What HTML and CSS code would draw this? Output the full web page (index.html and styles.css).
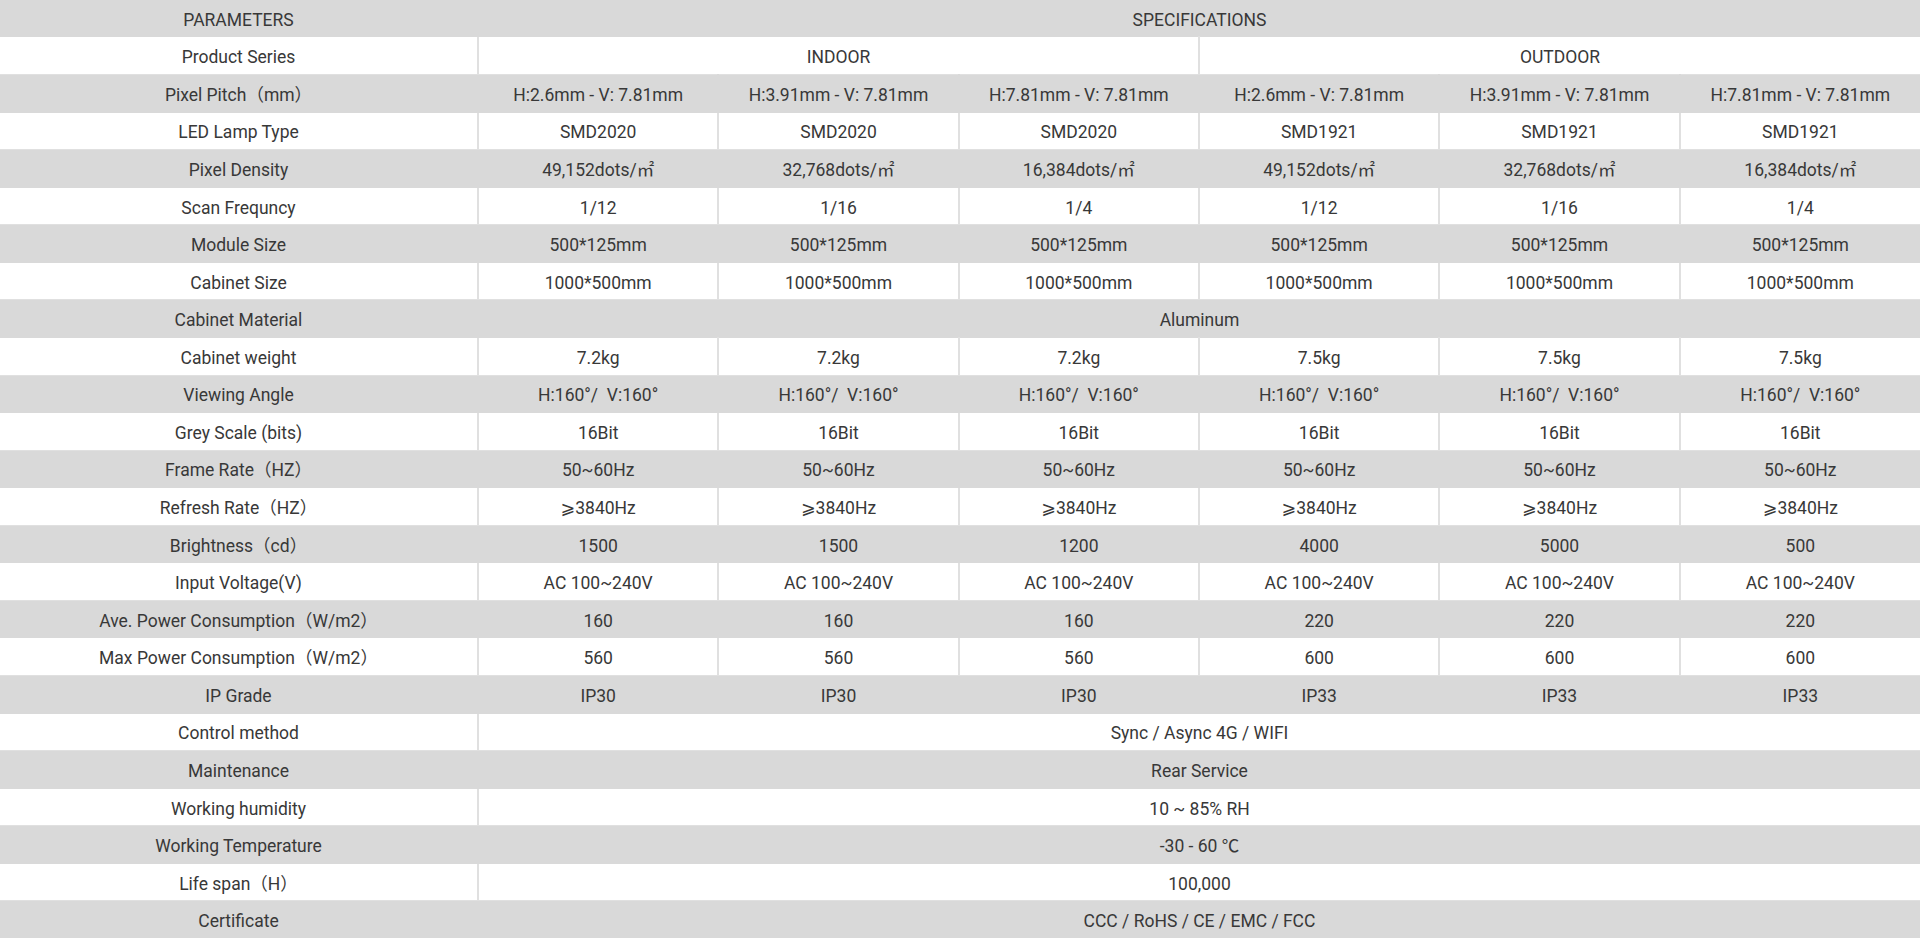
FILE: index.html
```html
<!DOCTYPE html>
<html lang="en">
<head>
<meta charset="utf-8">
<title>Specifications</title>
<link rel="stylesheet" href="styles.css">
</head>
<body>
<table class="spec">
<colgroup>
<col class="c-param"><col><col><col><col><col><col>
</colgroup>
<tbody>
<tr class="g"><td>PARAMETERS</td><td colspan="6">SPECIFICATIONS</td></tr>
<tr><td>Product Series</td><td colspan="3">INDOOR</td><td colspan="3">OUTDOOR</td></tr>
<tr class="g"><td>Pixel Pitch（mm）</td><td>H:2.6mm - V: 7.81mm</td><td>H:3.91mm - V: 7.81mm</td><td>H:7.81mm - V: 7.81mm</td><td>H:2.6mm - V: 7.81mm</td><td>H:3.91mm - V: 7.81mm</td><td>H:7.81mm - V: 7.81mm</td></tr>
<tr><td>LED Lamp Type</td><td>SMD2020</td><td>SMD2020</td><td>SMD2020</td><td>SMD1921</td><td>SMD1921</td><td>SMD1921</td></tr>
<tr class="g"><td>Pixel Density</td><td>49,152dots/㎡</td><td>32,768dots/㎡</td><td>16,384dots/㎡</td><td>49,152dots/㎡</td><td>32,768dots/㎡</td><td>16,384dots/㎡</td></tr>
<tr><td>Scan Frequncy</td><td>1/12</td><td>1/16</td><td>1/4</td><td>1/12</td><td>1/16</td><td>1/4</td></tr>
<tr class="g"><td>Module Size</td><td>500*125mm</td><td>500*125mm</td><td>500*125mm</td><td>500*125mm</td><td>500*125mm</td><td>500*125mm</td></tr>
<tr><td>Cabinet Size</td><td>1000*500mm</td><td>1000*500mm</td><td>1000*500mm</td><td>1000*500mm</td><td>1000*500mm</td><td>1000*500mm</td></tr>
<tr class="g"><td>Cabinet Material</td><td colspan="6">Aluminum</td></tr>
<tr><td>Cabinet weight</td><td>7.2kg</td><td>7.2kg</td><td>7.2kg</td><td>7.5kg</td><td>7.5kg</td><td>7.5kg</td></tr>
<tr class="g"><td>Viewing Angle</td><td>H:160°/&nbsp; V:160°</td><td>H:160°/&nbsp; V:160°</td><td>H:160°/&nbsp; V:160°</td><td>H:160°/&nbsp; V:160°</td><td>H:160°/&nbsp; V:160°</td><td>H:160°/&nbsp; V:160°</td></tr>
<tr><td>Grey Scale (bits)</td><td>16Bit</td><td>16Bit</td><td>16Bit</td><td>16Bit</td><td>16Bit</td><td>16Bit</td></tr>
<tr class="g"><td>Frame Rate（HZ）</td><td>50~60Hz</td><td>50~60Hz</td><td>50~60Hz</td><td>50~60Hz</td><td>50~60Hz</td><td>50~60Hz</td></tr>
<tr><td>Refresh Rate（HZ）</td><td>⩾3840Hz</td><td>⩾3840Hz</td><td>⩾3840Hz</td><td>⩾3840Hz</td><td>⩾3840Hz</td><td>⩾3840Hz</td></tr>
<tr class="g"><td>Brightness（cd）</td><td>1500</td><td>1500</td><td>1200</td><td>4000</td><td>5000</td><td>500</td></tr>
<tr><td>Input Voltage(V)</td><td>AC 100~240V</td><td>AC 100~240V</td><td>AC 100~240V</td><td>AC 100~240V</td><td>AC 100~240V</td><td>AC 100~240V</td></tr>
<tr class="g"><td>Ave. Power Consumption（W/m2）</td><td>160</td><td>160</td><td>160</td><td>220</td><td>220</td><td>220</td></tr>
<tr><td>Max Power Consumption（W/m2）</td><td>560</td><td>560</td><td>560</td><td>600</td><td>600</td><td>600</td></tr>
<tr class="g"><td>IP Grade</td><td>IP30</td><td>IP30</td><td>IP30</td><td>IP33</td><td>IP33</td><td>IP33</td></tr>
<tr><td>Control method</td><td colspan="6">Sync / Async 4G / WIFI</td></tr>
<tr class="g"><td>Maintenance</td><td colspan="6">Rear Service</td></tr>
<tr><td>Working humidity</td><td colspan="6">10 ~ 85% RH</td></tr>
<tr class="g"><td>Working Temperature</td><td colspan="6">-30 - 60 ℃</td></tr>
<tr><td>Life span（H）</td><td colspan="6">100,000</td></tr>
<tr class="g"><td>Certificate</td><td colspan="6">CCC / RoHS / CE / EMC / FCC</td></tr>
</tbody>
</table>
</body>
</html>
```
FILE: styles.css
```css
html, body {
  margin: 0;
  padding: 0;
  background: #ffffff;
}

.spec {
  width: 1920px;
  height: 938px;
  table-layout: fixed;
  border-collapse: collapse;
  font-family: Roboto, "Noto Sans CJK SC", "DejaVu Sans", sans-serif;
  font-size: 17.5px;
  color: #383838;
}

.c-param {
  width: 478px;
}

.spec td {
  height: 28px;
  padding: 3px 0 0;
  line-height: 20px;
  text-align: center;
  vertical-align: middle;
  white-space: nowrap;
  border: 2px solid #e0e0e0;
  border-top-width: 1px;
  border-bottom-width: 1px;
}

.spec tr:first-child td {
  border-top: 0;
}

.spec tr:last-child td {
  border-bottom: 0;
}

.spec td:first-child {
  border-left: 0;
}

.spec td:last-child {
  border-right: 0;
}

.spec tr.g td {
  background: #d9d9d9;
  border-color: #d9d9d9;
}
```
